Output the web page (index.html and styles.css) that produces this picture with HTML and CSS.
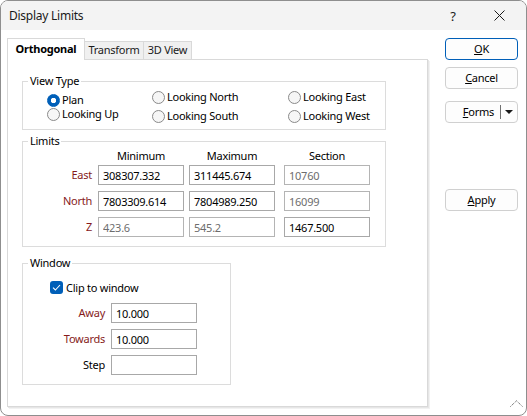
FILE: index.html
```html
<!DOCTYPE html>
<html lang="en">
<head>
    <meta charset="UTF-8">
    <title>Display Limits</title>
    <link rel="stylesheet" href="styles.css">
</head>
<body>

<div class="window">
    <div class="titlebar">
        <span class="title">Display Limits</span>
        <span class="caption-btn">?</span>
        <span class="caption-btn">
            <svg width="11" height="11" viewBox="0 0 11 11"><path d="M0.5 0.5 L10.5 10.5 M10.5 0.5 L0.5 10.5" stroke="#1a1a1a" stroke-width="1" fill="none"/></svg>
        </span>
    </div>

    <div class="content">
        <div class="tabs">
            <div class="tabstrip">
                <div class="tab active">Orthogonal</div>
                <div class="tab t-transform">Transform</div>
                <div class="tab t-3d">3D View</div>
            </div>

            <div class="panel">
                <!-- View type -->
                <fieldset class="group view-type">
                    <legend>View Type</legend>
                    <div class="radios">
                        <div class="radio-col c1">
                            <label class="radio checked"><span class="dot"></span>Plan</label>
                            <label class="radio"><span class="dot"></span>Looking Up</label>
                        </div>
                        <div class="radio-col c2">
                            <label class="radio"><span class="dot"></span>Looking North</label>
                            <label class="radio"><span class="dot"></span>Looking South</label>
                        </div>
                        <div class="radio-col c3">
                            <label class="radio"><span class="dot"></span>Looking East</label>
                            <label class="radio"><span class="dot"></span>Looking West</label>
                        </div>
                    </div>
                </fieldset>

                <!-- Limits -->
                <fieldset class="group limits">
                    <legend>Limits</legend>
                    <div class="limits-grid head">
                        <span></span>
                        <span class="col-head">Minimum</span>
                        <span class="col-head">Maximum</span>
                        <span class="col-head">Section</span>
                    </div>
                    <div class="limits-grid">
                        <span class="lbl req">East</span>
                        <input class="field" value="308307.332">
                        <input class="field" value="311445.674">
                        <input class="field off" value="10760">

                        <span class="lbl req">North</span>
                        <input class="field" value="7803309.614">
                        <input class="field" value="7804989.250">
                        <input class="field off" value="16099">

                        <span class="lbl req">Z</span>
                        <input class="field off" value="423.6">
                        <input class="field off" value="545.2">
                        <input class="field" value="1467.500">
                    </div>
                </fieldset>

                <!-- Window -->
                <fieldset class="group win">
                    <legend>Window</legend>
                    <label class="check">
                        <span class="box">
                            <svg width="9" height="7" viewBox="0 0 9 7"><path d="M1 3.6 L3.4 6 L8 1" stroke="#fff" stroke-width="1.1" fill="none"/></svg>
                        </span>
                        Clip to window
                    </label>
                    <div class="win-grid">
                        <span class="lbl req">Away</span>
                        <input class="field" value="10.000">
                        <span class="lbl req">Towards</span>
                        <input class="field" value="10.000">
                        <span class="lbl">Step</span>
                        <input class="field" value="">
                    </div>
                </fieldset>
            </div>
        </div>

        <div class="buttons">
            <div class="btn default"><u>O</u>K</div>
            <div class="btn cancel"><u>C</u>ancel</div>
            <div class="btn forms">
                <span class="forms-text"><u>F</u>orms</span>
                <span class="sep"></span>
                <span class="arrow"></span>
            </div>
            <div class="btn apply"><u>A</u>pply</div>
        </div>
    </div>

    <svg class="grip" width="13" height="7" viewBox="0 0 13 7"><path d="M0.5 6.5 L6.5 0.8 L12.5 6.5" stroke="#444" stroke-width="1" fill="none" stroke-dasharray="1 1"/></svg>
</div>

</body>
</html>
```

FILE: styles.css
```css
body {
    margin: 0;
    background: #fff;
    font-family: "Noto Sans", sans-serif;
    font-size: 11px;
    letter-spacing: -0.25px;
    color: #1a1a1a;
}

.window {
    position: relative;
    width: 527px;
    height: 416px;
    box-sizing: border-box;
    border: 1px solid #8e8e8e;
    border-radius: 8px;
    overflow: hidden;
    display: flex;
    flex-direction: column;
    background: #fff;
}

/* Title bar */
.titlebar {
    height: 29px;
    flex: none;
    background: #f3f3f3;
    display: flex;
    align-items: center;
    padding: 0 4px 0 8px;
    font-size: 12px;
}

.title {
    flex: 1;
}

.caption-btn {
    width: 46px;
    text-align: center;
    font-size: 13px;
    display: flex;
    justify-content: center;
}

/* Body */
.content {
    flex: 1;
    display: flex;
    padding: 8px 0 0 6px;
}

.tabs {
    width: 421px;
    display: flex;
    flex-direction: column;
}

.tabstrip {
    display: flex;
    align-items: flex-end;
    height: 21px;
}

.tab {
    height: 18px;
    box-sizing: border-box;
    border: 1px solid #d9d9d9;
    border-bottom: none;
    background: #f0f0f0;
    line-height: 16px;
    text-align: center;
}

.tab.active {
    width: 78px;
    height: 22px;
    margin-bottom: -1px;
    position: relative;
    z-index: 1;
    background: #fff;
    font-weight: bold;
    line-height: 20px;
    color: #000;
}

.t-transform {
    width: 59px;
    border-left: none;
}

.t-3d {
    width: 48px;
    border-left: none;
}

.panel {
    height: 348px;
    box-sizing: border-box;
    border: 1px solid #d9d9d9;
    background: #fff;
    box-shadow: 1px 1px 0 #e6e6e6, 2px 2px 0 #f2f2f2;
    padding: 13px 0 0 14px;
}

/* Group boxes */
.group {
    margin: 0;
    padding: 0;
    border: 1px solid #dcdcdc;
    box-sizing: border-box;
    min-width: 0;
}

.group legend {
    margin-left: 5px;
    padding: 0 2px;
    line-height: 16px;
    color: #000;
}

.view-type {
    width: 364px;
}

.radios {
    display: flex;
    height: 40px;
    padding-left: 24px;
}

.radio-col {
    display: flex;
    flex-direction: column;
}

.radio-col.c1 {
    width: 105px;
    padding-top: 4px;
}

.radio-col.c2,
.radio-col.c3 {
    padding-top: 1px;
    gap: 5px;
}

.radio-col.c2 {
    width: 136px;
}

.radio {
    display: flex;
    align-items: center;
    gap: 2px;
    height: 14px;
    line-height: 14px;
    color: #000;
}

.dot {
    width: 13px;
    height: 13px;
    box-sizing: border-box;
    border-radius: 50%;
    border: 1px solid #8a8a8a;
    background: #f6f6f6;
}

.radio.checked .dot {
    border-color: #005fb8;
    background: radial-gradient(circle, #fff 0 2.4px, #005fb8 3px);
}

/* Limits */
.limits {
    width: 364px;
    margin-top: 3px;
    padding-bottom: 9px;
}

.limits-grid {
    display: grid;
    grid-template-columns: 70px 86px 90px 86px;
    column-gap: 5px;
    row-gap: 6px;
}

.limits-grid.head {
    height: 16px;
    line-height: 14px;
}

.col-head {
    width: 86px;
    text-align: center;
    color: #000;
}

.lbl {
    text-align: right;
    padding-right: 1px;
    line-height: 20px;
    color: #000;
}

.lbl.req {
    color: #861b1b;
}

.field {
    width: 86px;
    height: 20px;
    box-sizing: border-box;
    margin: 0;
    border: 1px solid #a8a8a8;
    padding: 0 4px;
    font: inherit;
    letter-spacing: inherit;
    color: #000;
    background: #fff;
    outline: none;
}

.field.off {
    color: #6d6d6d;
    border-color: #b4b4b4;
}

/* Window group */
.win {
    width: 209px;
    margin-top: 8px;
    padding-bottom: 9px;
}

.check {
    display: flex;
    align-items: center;
    gap: 3px;
    height: 16px;
    margin-top: 8px;
    padding-left: 27px;
    color: #000;
}

.box {
    width: 13px;
    height: 13px;
    border-radius: 3px;
    background: #005fb8;
    display: flex;
    align-items: center;
    justify-content: center;
}

.win-grid {
    display: grid;
    grid-template-columns: 82px 86px;
    column-gap: 6px;
    row-gap: 6px;
    margin-top: 8px;
}

.win-grid .lbl {
    padding-right: 0;
}

/* Dialog buttons */
.buttons {
    width: 73px;
    margin-left: 17px;
    display: flex;
    flex-direction: column;
}

.btn {
    height: 22px;
    box-sizing: border-box;
    border: 1px solid #d0d0d0;
    border-radius: 4px;
    background: #fdfdfd;
    text-align: center;
    line-height: 20px;
    color: #000;
}

.btn.default {
    border-color: #005fb8;
}

.btn.cancel {
    margin-top: 7px;
}

.btn.forms {
    margin-top: 12px;
    display: flex;
    align-items: center;
}

.forms-text {
    flex: 1;
    text-align: right;
    padding-right: 6px;
}

.sep {
    width: 1px;
    height: 14px;
    background: #707070;
}

.arrow {
    width: 16px;
    display: flex;
    justify-content: center;
}

.arrow:before {
    content: "";
    border-left: 4px solid transparent;
    border-right: 4px solid transparent;
    border-top: 4px solid #1a1a1a;
}

.btn.apply {
    margin-top: 66px;
}

.grip {
    position: absolute;
    right: 3px;
    bottom: 8px;
}
```
